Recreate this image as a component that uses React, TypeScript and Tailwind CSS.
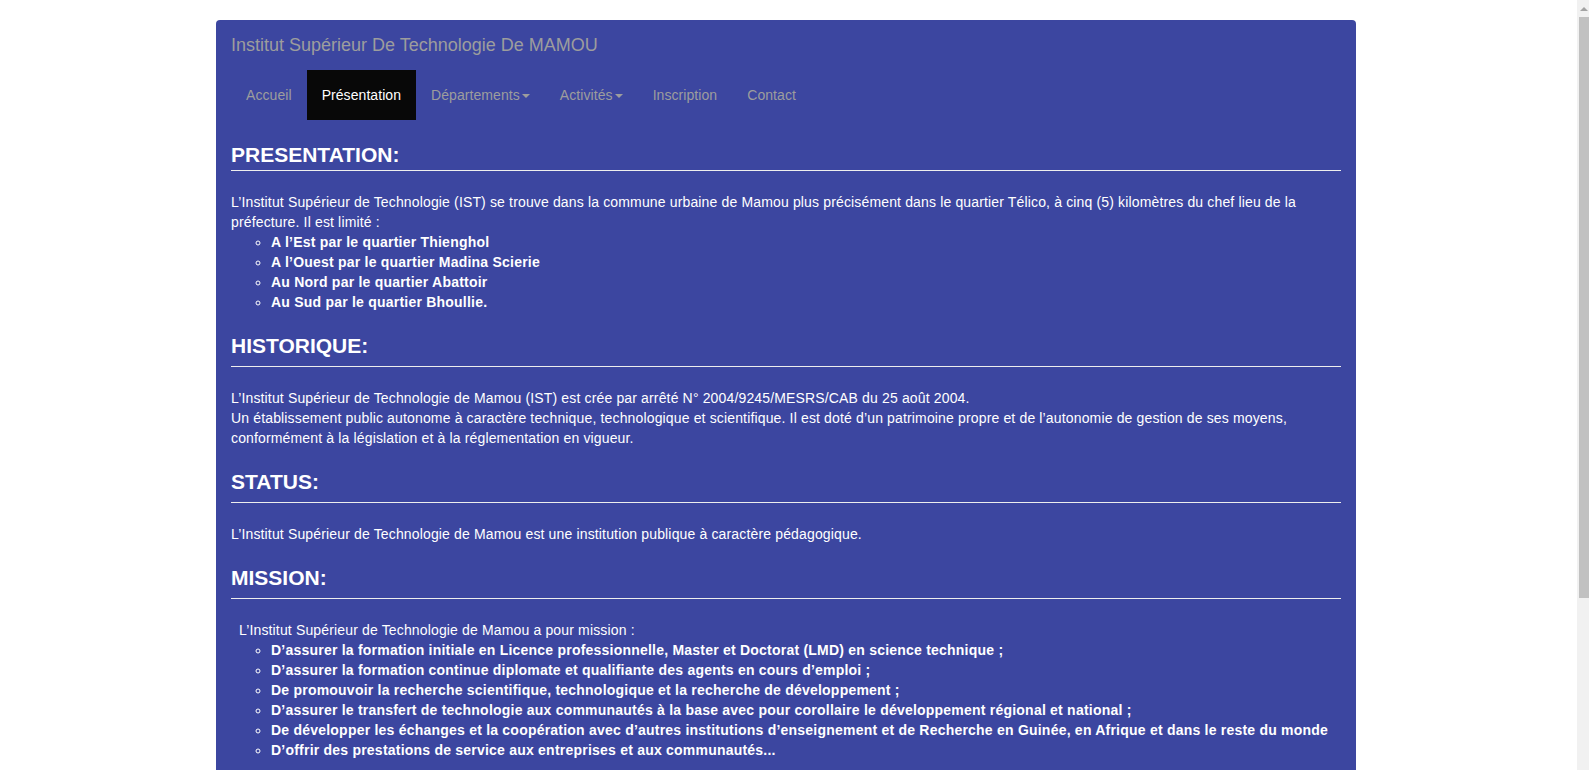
import React from "react";

function Caret() {
  return (
    <span className="ml-[2px] inline-block h-0 w-0 border-x-[4px] border-t-[4px] border-x-transparent border-t-[#9d9d9d] align-middle" />
  );
}

function Heading({ children, first }: { children: React.ReactNode; first?: boolean }) {
  return (
    <h3
      className={
        first
          ? "mt-[23px] border-b border-[#eeeeee] pb-[4px] text-[21px] font-bold leading-[23px] text-white"
          : "mt-[22px] border-b border-[#eeeeee] pb-[9px] text-[21px] font-bold leading-[23px] text-white"
      }
    >
      {children}
    </h3>
  );
}

export default function App() {
  const navItems: { label: string; active?: boolean; caret?: boolean }[] = [
    { label: "Accueil" },
    { label: "Présentation", active: true },
    { label: "Départements", caret: true },
    { label: "Activités", caret: true },
    { label: "Inscription" },
    { label: "Contact" },
  ];

  return (
    <div className="flex h-[770px] w-[1589px] overflow-hidden bg-white font-['Liberation_Sans',Arial,Helvetica,sans-serif] text-[14px] leading-[20px]">
      <div className="h-[770px] flex-1 overflow-hidden">
        <div className="mx-auto w-[1170px] px-[15px] pt-[20px]">
          <div className="rounded-[4px] bg-[#3c46a0] pb-[40px]">
            <div className="h-[50px] px-[15px] py-[15px] text-[18px] leading-[20px] text-[#9d9d9d]">
              Institut Supérieur De Technologie De MAMOU
            </div>
            <ul className="ml-[15px] flex tracking-[0.07px]">
              {navItems.map((n) => (
                <li key={n.label}>
                  <span
                    className={
                      n.active
                        ? "block bg-[#080808] px-[15px] py-[15px] leading-[20px] text-white"
                        : "block px-[15px] py-[15px] leading-[20px] text-[#9d9d9d]"
                    }
                  >
                    {n.label}
                    {n.caret && <Caret />}
                  </span>
                </li>
              ))}
            </ul>

            <div className="px-[15px] text-white">
              <Heading first>PRESENTATION:</Heading>
              <div className="mt-[21px]">
                <p className="tracking-[0.15px]">
                  L’Institut Supérieur de Technologie (IST) se trouve dans la commune urbaine de Mamou plus précisément dans le quartier Télico, à cinq (5) kilomètres du chef lieu de la préfecture. Il est limité :
                </p>
                <ul className="list-[circle] pl-[40px] font-bold tracking-[0.22px]">
                  <li>A l’Est par le quartier Thienghol</li>
                  <li>A l’Ouest par le quartier Madina Scierie</li>
                  <li>Au Nord par le quartier Abattoir</li>
                  <li>Au Sud par le quartier Bhoullie.</li>
                </ul>
              </div>

              <Heading>HISTORIQUE:</Heading>
              <div className="mt-[21px]">
                <p className="tracking-[0.15px]">
                  L’Institut Supérieur de Technologie de Mamou (IST) est crée par arrêté N° 2004/9245/MESRS/CAB du 25 août 2004.
                  <br />
                  Un établissement public autonome à caractère technique, technologique et scientifique. Il est doté d’un patrimoine propre et de l’autonomie de gestion de ses moyens, conformément à la législation et à la réglementation en vigueur.
                </p>
              </div>

              <Heading>STATUS:</Heading>
              <div className="mt-[21px]">
                <p className="tracking-[0.15px]">L’Institut Supérieur de Technologie de Mamou est une institution publique à caractère pédagogique.</p>
              </div>

              <Heading>MISSION:</Heading>
              <div className="mt-[21px]">
                <p className="pl-[8px] tracking-[0.15px]">L’Institut Supérieur de Technologie de Mamou a pour mission :</p>
                <ul className="list-[circle] pl-[40px] font-bold tracking-[0.22px]">
                  <li>D’assurer la formation initiale en Licence professionnelle, Master et Doctorat (LMD) en science technique ;</li>
                  <li>D’assurer la formation continue diplomate et qualifiante des agents en cours d’emploi ;</li>
                  <li>De promouvoir la recherche scientifique, technologique et la recherche de développement ;</li>
                  <li>D’assurer le transfert de technologie aux communautés à la base avec pour corollaire le développement régional et national ;</li>
                  <li>De développer les échanges et la coopération avec d’autres institutions d’enseignement et de Recherche en Guinée, en Afrique et dans le reste du monde</li>
                  <li>D’offrir des prestations de service aux entreprises et aux communautés...</li>
                </ul>
              </div>
            </div>
          </div>
        </div>
      </div>

      <div className="flex h-[770px] w-[17px] shrink-0 bg-white pl-[5px]">
        <div className="flex h-full w-[12px] flex-col bg-[#f1f1f1]">
          <div className="flex h-[17px] items-center justify-center pl-[2px]">
            <span className="h-0 w-0 border-x-[4px] border-b-[4px] border-x-transparent border-b-[#a3a3a3]" />
          </div>
          <div className="ml-[2px] h-[581px] w-[10px] bg-[#c1c1c1]" />
        </div>
      </div>
    </div>
  );
}
